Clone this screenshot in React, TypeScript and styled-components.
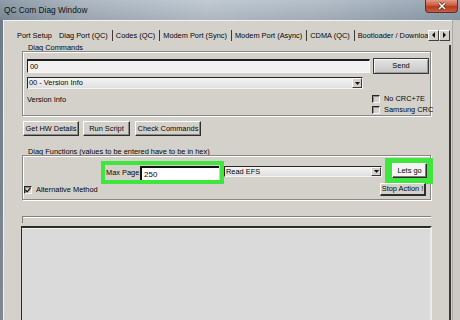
import styled, { createGlobalStyle } from "styled-components";

const GlobalStyle = createGlobalStyle`
  html, body {
    margin: 0;
    padding: 0;
  }
  body {
    font-family: "Liberation Sans", Arial, sans-serif;
  }
`;

const GREEN = "#3ee63e";
const FACE = "#d4d1cb";

const TABS = [
    { label: "Port Setup", sep: false },
    { label: "Diag Port (QC)", sep: true },
    { label: "Codes (QC)", sep: true },
    { label: "Modem Port (Sync)", sep: true },
    { label: "Modem Port (Async)", sep: true },
    { label: "CDMA (QC)", sep: true },
    { label: "Bootloader / Download", sep: false },
];

export default function App() {
    return (
        <>
            <GlobalStyle />
            <Window>
                {/* title bar */}
                <TitleBar>
                    <Title>QC Com Diag Window</Title>
                    <CloseButton>
                        <svg width="10" height="8" viewBox="0 0 10 8">
                            <path
                                d="M2 1 L8 7 M8 1 L2 7"
                                stroke="#5a2518"
                                strokeWidth="3"
                            />
                            <path
                                d="M2 1 L8 7 M8 1 L2 7"
                                stroke="#fff"
                                strokeWidth="1.6"
                            />
                        </svg>
                    </CloseButton>
                </TitleBar>

                <Frame>
                    <LeftEdge />
                    <Main>
                        {/* tabs */}
                        <TabStrip>
                            <Tabs>
                                {TABS.map((t) => (
                                    <Tab key={t.label} $sep={t.sep}>
                                        {t.label}
                                    </Tab>
                                ))}
                            </Tabs>
                            <ArrowBox>
                                <svg width="5" height="6" viewBox="0 0 5 6">
                                    <polygon points="4,0 4,6 1,3" fill="#111" />
                                </svg>
                            </ArrowBox>
                            <ArrowBox>
                                <svg width="5" height="6" viewBox="0 0 5 6">
                                    <polygon points="1,0 1,6 4,3" fill="#111" />
                                </svg>
                            </ArrowBox>
                        </TabStrip>

                        <TabPage>
                            {/* diag commands */}
                            <Legend>Diag Commands</Legend>
                            <CommandsBox>
                                <FieldRow>
                                    <TextField readOnly value="00" />
                                    <SendButton>Send</SendButton>
                                </FieldRow>
                                <Combo $w={336} $h={12}>
                                    <ComboText>00 - Version Info</ComboText>
                                    <ComboArrow>
                                        <svg width="5" height="3" viewBox="0 0 5 3">
                                            <polygon points="0,0 5,0 2.5,3" fill="#111" />
                                        </svg>
                                    </ComboArrow>
                                </Combo>
                                <InfoRow>
                                    <InfoLabel>Version Info</InfoLabel>
                                    <Checks>
                                        <CheckRow>
                                            <CheckBox />
                                            <span>No CRC+7E</span>
                                        </CheckRow>
                                        <CheckRow>
                                            <CheckBox />
                                            <span>Samsung CRC</span>
                                        </CheckRow>
                                    </Checks>
                                </InfoRow>
                            </CommandsBox>

                            <ButtonRow>
                                <Button $w={56}>Get HW Details</Button>
                                <Button $w={47}>Run Script</Button>
                                <Button $w={66}>Check Commands</Button>
                            </ButtonRow>

                            {/* diag functions */}
                            <Legend $top={13}>
                                Diag Functions (values to be entered have to be in hex)
                            </Legend>
                            <FunctionsBox>
                                <ActionRow>
                                    <MaxPageMark>
                                        <MaxLabel>Max Page</MaxLabel>
                                        <PageField readOnly value="250" />
                                    </MaxPageMark>
                                    <Combo $w={158} $h={11} $top={8}>
                                        <ComboText>Read EFS</ComboText>
                                        <ComboArrow>
                                            <svg width="5" height="3" viewBox="0 0 5 3">
                                                <polygon points="0,0 5,0 2.5,3" fill="#111" />
                                            </svg>
                                        </ComboArrow>
                                    </Combo>
                                    <GoMark>
                                        <GoButton>Lets go</GoButton>
                                    </GoMark>
                                </ActionRow>
                                <OptionRow>
                                    <CheckRow>
                                        <CheckBox>
                                            <svg width="6" height="6" viewBox="0 0 6 6">
                                                <path
                                                    d="M0.5 3 L2.2 4.8 L5.5 0.8"
                                                    stroke="#111"
                                                    strokeWidth="1.2"
                                                    fill="none"
                                                />
                                            </svg>
                                        </CheckBox>
                                        <span>Alternative Method</span>
                                    </CheckRow>
                                    <StopButton $w={46}>Stop Action !</StopButton>
                                </OptionRow>
                            </FunctionsBox>

                            {/* output */}
                            <OutputRule />
                            <OutputArea />
                        </TabPage>
                    </Main>
                    <RightEdge />
                </Frame>
            </Window>
        </>
    );
}

const Window = styled.div`
    width: 460px;
    height: 320px;
    overflow: hidden;
    display: flex;
    flex-direction: column;
    background: ${FACE};
    color: #050505;
    font-size: 7.4px;
`;

const TitleBar = styled.div`
    flex: none;
    height: 20px;
    display: flex;
    align-items: flex-start;
    background: linear-gradient(rgba(255, 255, 255, 0.12), rgba(0, 0, 0, 0.06)),
        linear-gradient(
            90deg,
            #7f8e9c 0%,
            #a3afbb 18%,
            #b9c3cd 45%,
            #aab6c2 70%,
            #8b9aa9 100%
        );
`;

const Title = styled.div`
    padding: 5px 0 0 4px;
    font-size: 8.3px;
    line-height: 10px;
    color: #111;
`;

const CloseButton = styled.div`
    margin-left: auto;
    margin-right: 2px;
    width: 33px;
    height: 13px;
    box-sizing: border-box;
    border: 1px solid #6a2c1f;
    border-top: none;
    border-radius: 0 0 4px 4px;
    background: linear-gradient(#e39a84, #cb5a3e 45%, #b33c22 55%, #c65e3e);
    display: flex;
    align-items: center;
    justify-content: center;
`;

const Frame = styled.div`
    flex: 1;
    min-height: 0;
    display: flex;
`;

const LeftEdge = styled.div`
    width: 3px;
    background: linear-gradient(#6e7b88, #7d8893);
`;

const RightEdge = styled.div`
    width: 8px;
    box-sizing: border-box;
    border-left: 1px solid #aeaca7;
    background: #cdcac5;
`;

const Main = styled.div`
    flex: 1;
    min-width: 0;
    display: flex;
    flex-direction: column;
    border-left: 1px solid #f2f2f2;
    border-top: 1px solid #f2f2f2;
`;

const TabStrip = styled.div`
    flex: none;
    height: 24px;
    box-sizing: border-box;
    padding: 4px 2px 0 10px;
    display: flex;
    align-items: center;
`;

const Tabs = styled.div`
    flex: 1;
    min-width: 0;
    display: flex;
    align-items: center;
    overflow: hidden;
    white-space: nowrap;
`;

const Tab = styled.div<{ $sep: boolean }>`
    flex: none;
    padding: 0 4px 0 3px;
    height: 11px;
    line-height: 11px;
    border-right: ${(p) => (p.$sep ? "1px solid #3a3a3a" : "none")};
`;

const ArrowBox = styled.div`
    flex: none;
    width: 11px;
    height: 11px;
    box-sizing: border-box;
    border: 1px solid;
    border-color: #fff #404040 #404040 #fff;
    background: ${FACE};
    display: flex;
    align-items: center;
    justify-content: center;
`;

const TabPage = styled.div`
    flex: 1;
    min-height: 0;
    margin-right: 1px;
    border-right: 2px solid #363636;
    padding: 0 18px;
    display: flex;
    flex-direction: column;
`;

const Legend = styled.div<{ $top?: number }>`
    flex: none;
    height: 6px;
    line-height: 6px;
    margin: ${(p) => p.$top || 0}px 0 0 6px;
    white-space: nowrap;
`;

const GroupBox = styled.div`
    flex: none;
    display: flex;
    flex-direction: column;
    border: 1px solid #878787;
    box-shadow: inset 1px 1px 0 #fff, 1px 1px 0 #fff;
`;

const CommandsBox = styled(GroupBox)`
    padding: 6px 1px 0 4px;
`;

const FieldRow = styled.div`
    display: flex;
    align-items: center;
    gap: 3px;
    height: 16px;
`;

const TextField = styled.input`
    flex: 1;
    min-width: 0;
    height: 14px;
    box-sizing: border-box;
    margin: 0;
    padding: 0 2px;
    font: inherit;
    color: inherit;
    background: #f1f1f1;
    border: 1px solid;
    border-width: 2px 1px 1px 1px;
    border-color: #1e1e1e #f6f6f6 #f6f6f6 #1e1e1e;
    outline: none;
`;

const Button = styled.button<{ $w: number }>`
    flex: none;
    width: ${(p) => p.$w}px;
    height: 15px;
    box-sizing: border-box;
    margin: 0;
    padding: 0;
    font: inherit;
    color: inherit;
    line-height: 12px;
    white-space: nowrap;
    background: ${FACE};
    border: 1px solid;
    border-color: #fff #2e2e2e #2e2e2e #fff;
    box-shadow: inset -1px -1px 0 #8a8a8a;
`;

const SendButton = styled(Button).attrs({ $w: 56 })`
    height: 16px;
    border-color: #3a3a3a;
    background: linear-gradient(#e4e4e4, #c6c6c6);
    box-shadow: inset 1px 1px 0 #f6f6f6, inset -1px -1px 0 #9a9a9a;
`;

const Combo = styled.div<{ $w: number; $h: number; $top?: number }>`
    flex: none;
    width: ${(p) => p.$w}px;
    height: ${(p) => p.$h}px;
    margin-top: ${(p) => (p.$top === undefined ? 3 : p.$top)}px;
    box-sizing: border-box;
    display: flex;
    border: 1px solid;
    border-color: #262626 #f4f4f4 #f4f4f4 #262626;
    background: linear-gradient(#f5f5f5, #e0e0e0);
`;

const ComboText = styled.div`
    flex: 1;
    padding-left: 1px;
    line-height: 10px;
    white-space: nowrap;
`;

const ComboArrow = styled.div`
    flex: none;
    width: 10px;
    box-sizing: border-box;
    border: 1px solid;
    border-color: #fff #3a3a3a #3a3a3a #fff;
    background: ${FACE};
    display: flex;
    align-items: center;
    justify-content: center;
`;

const InfoRow = styled.div`
    display: flex;
    justify-content: space-between;
    margin-top: 4px;
    height: 22px;
`;

const InfoLabel = styled.div`
    margin-top: 2px;
    line-height: 9px;
`;

const Checks = styled.div`
    width: 57px;
    display: flex;
    flex-direction: column;
`;

const CheckRow = styled.div`
    display: flex;
    align-items: center;
    gap: 4px;
    height: 11px;
    white-space: nowrap;
`;

const CheckBox = styled.span`
    flex: none;
    width: 8px;
    height: 8px;
    box-sizing: border-box;
    border: 1px solid;
    border-color: #262626 #f4f4f4 #f4f4f4 #262626;
    box-shadow: inset 1px 1px 0 #8c8c8c;
    display: flex;
    align-items: center;
    justify-content: center;
`;

const ButtonRow = styled.div`
    display: flex;
    gap: 4px;
    margin-top: 5px;
    padding-left: 1px;

    & > :last-child {
        margin-left: 1px;
    }
`;

const FunctionsBox = styled(GroupBox)`
    padding: 2px 0 3px 1px;
`;

const ActionRow = styled.div`
    display: flex;
    align-items: flex-start;
    height: 25px;
`;

const MaxPageMark = styled.div`
    flex: none;
    margin: 3px 0 0 77px;
    width: 123px;
    height: 23px;
    box-sizing: border-box;
    border: 4px solid ${GREEN};
    display: flex;
    align-items: flex-end;
`;

const MaxLabel = styled.div`
    flex: none;
    width: 35px;
    padding-left: 1px;
    box-sizing: border-box;
    line-height: 14px;
    white-space: nowrap;
`;

const PageField = styled.input`
    flex: none;
    width: 79px;
    height: 14px;
    box-sizing: border-box;
    margin: 0;
    padding: 0 2px;
    font: inherit;
    font-size: 8px;
    color: inherit;
    background: #fff;
    border: 1px solid;
    border-width: 2px 0 0 2px;
    border-color: #111;
    outline: none;
`;

const GoMark = styled.div`
    flex: none;
    margin-left: 3px;
    width: 48px;
    height: 26px;
    box-sizing: border-box;
    padding: 5px 6px 6px 7px;
    background: ${GREEN};
`;

const GoButton = styled(Button).attrs({ $w: 35 })`
    width: 100%;
    height: 100%;
    background: #f4f4f4;
    box-shadow: inset -1px -1px 0 #7a7a7a;
`;

const OptionRow = styled.div`
    display: flex;
    align-items: center;
    justify-content: space-between;
    height: 13px;
    padding-right: 4px;
`;

const StopButton = styled(Button)`
    height: 13px;
    line-height: 10px;
    border-width: 1px 2px 2px 1px;
    box-shadow: none;
    position: relative;
`;

const OutputRule = styled.div`
    flex: none;
    margin-top: 16px;
    height: 6px;
    border-top: 1px solid #7f7f7f;
    border-left: 1px solid #7f7f7f;
    box-shadow: inset 0 1px 0 #fff;
`;

const OutputArea = styled.div`
    flex: 1;
    margin: 3px -1px 0 -1px;
    border-top: 2px solid #2a2a2a;
    border-left: 1px solid #2a2a2a;
    border-right: 2px solid #ececec;
    box-shadow: inset 0 1px 0 #f2f2f2;
    background: #dadada;
`;
